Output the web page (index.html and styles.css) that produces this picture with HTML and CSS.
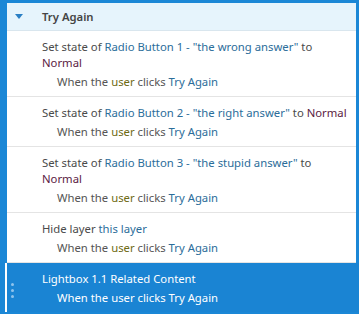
FILE: index.html
```html
<!DOCTYPE html>
<html lang="en">
<head>
    <meta charset="UTF-8">
    <title>Try Again</title>
    <link rel="stylesheet" href="styles.css">
</head>
<body>
    <div class="panel">
        <div class="group-head">
            <span class="caret"></span>
            <span class="group-title">Try Again</span>
        </div>

        <div class="action">
            <div class="action-text">Set state of <span class="obj">Radio Button 1 - "the wrong answer"</span> to <span class="state">Normal</span></div>
            <div class="trigger">When the <span class="who">user</span> clicks <span class="obj">Try Again</span></div>
        </div>

        <div class="action">
            <div class="action-text">Set state of <span class="obj">Radio Button 2 - "the right answer"</span> to <span class="state">Normal</span></div>
            <div class="trigger">When the <span class="who">user</span> clicks <span class="obj">Try Again</span></div>
        </div>

        <div class="action">
            <div class="action-text">Set state of <span class="obj">Radio Button 3 - "the stupid answer"</span> to <span class="state">Normal</span></div>
            <div class="trigger">When the <span class="who">user</span> clicks <span class="obj">Try Again</span></div>
        </div>

        <div class="action">
            <div class="action-text">Hide layer <span class="obj">this layer</span></div>
            <div class="trigger">When the <span class="who">user</span> clicks <span class="obj">Try Again</span></div>
        </div>

        <div class="action selected">
            <span class="grip"><i></i><i></i><i></i></span>
            <div class="action-text">Lightbox 1.1 Related Content</div>
            <div class="trigger">When the user clicks Try Again</div>
        </div>
    </div>
</body>
</html>
```
FILE: styles.css
```css
body {
    margin: 0;
    height: 314px;
    overflow: hidden;
    background-color: #1b87d6;
    font-family: "Noto Sans", sans-serif;
    font-size: 11.3px;
    color: #4a4a4a;
}
.panel {
    margin: 3px 3px 0 7px;
    background: #fff;
}
.group-head {
    height: 27px;
    display: flex;
    align-items: center;
    background-color: #e6f4fc;
    border-bottom: 1px solid #d9e6ee;
}
.caret {
    width: 0;
    height: 0;
    margin: 0 19px 0 8px;
    border-left: 4px solid transparent;
    border-right: 4px solid transparent;
    border-top: 5px solid #2a7fc4;
}
.group-title {
    font-weight: 600;
    color: #444;
}
.action {
    position: relative;
    padding: 8px 4px 6px 35px;
    border-bottom: 1px solid #e4e4e4;
    line-height: 16px;
}
.trigger {
    margin-top: 3px;
    padding-left: 15px;
    color: #555;
}
.obj {
    color: #2b6d9a;
}
.state {
    color: #5b2142;
}
.who {
    color: #6e6a12;
}
.selected {
    margin: 0 -3px 0 -2px;
    border-left: 2px solid #fff;
    border-bottom: none;
    padding-left: 35px;
    background-color: #1a84d3;
    color: #fff;
}
.selected .trigger {
    color: #fff;
}
.grip {
    position: absolute;
    left: 4px;
    top: 20px;
    display: flex;
    flex-direction: column;
    gap: 3px;
}
.grip i {
    width: 3px;
    height: 3px;
    border-radius: 50%;
    background-color: #8fc3ec;
}
```
